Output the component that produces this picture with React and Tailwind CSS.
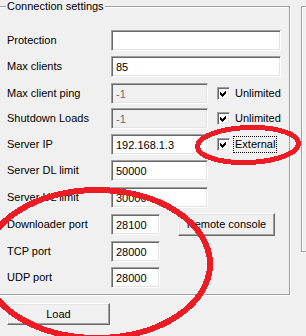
import React from 'react';

// field widths
const WIDE = 'w-[170px]';
const MID = 'w-[97px]';
const SHORT = 'w-[49px]';

const rows = [
  { label: 'Protection', value: '', width: WIDE, gap: 'mt-0' },
  { label: 'Max clients', value: '85', width: WIDE, gap: 'mt-[5px]' },
  { label: 'Max client ping', value: '-1', width: MID, gap: 'mt-[6px]', disabled: true, check: 'Unlimited' },
  { label: 'Shutdown Loads', value: '-1', width: MID, gap: 'mt-[4px]', disabled: true, check: 'Unlimited' },
  { label: 'Server IP', value: '192.168.1.3', width: MID, gap: 'mt-[5px]', check: 'External', focused: true },
  { label: 'Server DL limit', value: '50000', width: MID, gap: 'mt-[5px]' },
  { label: 'Server UL limit', value: '30000', width: MID, gap: 'mt-[6px]' },
  { label: 'Downloader port', value: '28100', width: SHORT, gap: 'mt-[6px]', button: 'Remote console' },
  { label: 'TCP port', value: '28000', width: SHORT, gap: 'mt-[6px]' },
  { label: 'UDP port', value: '28000', width: SHORT, gap: 'mt-[5px]' },
];

function TextField({ value, width, disabled }) {
  return (
    <input
      readOnly
      value={value}
      className={`h-[21px] ${width} pl-[4px] outline-none border border-t-[#a0a0a0] border-l-[#a0a0a0] border-b-white border-r-white shadow-[inset_1px_1px_0_#696969,inset_-1px_-1px_0_#e3e3e3] ${
        disabled ? 'bg-[#f0f0f0] text-[#6d6d6d]' : 'bg-white text-black'
      }`}
    />
  );
}

function CheckBox({ label, focused }) {
  return (
    <div className="ml-[9px] flex items-center">
      <div className="w-[13px] h-[13px] bg-white border border-t-[#a0a0a0] border-l-[#a0a0a0] border-b-white border-r-white shadow-[inset_1px_1px_0_#696969,inset_-1px_-1px_0_#e3e3e3]">
        <svg width="11" height="11" viewBox="0 0 11 11" shapeRendering="crispEdges">
          <path d="M2 4 L4 6 L8 2 L8 5 L4 9 L2 7 Z" fill="#000" />
        </svg>
      </div>
      {focused ? (
        <span className="ml-[3px] h-[17px] px-[1px] flex items-center border border-dotted border-black">{label}</span>
      ) : (
        <span className="ml-[5px]">{label}</span>
      )}
    </div>
  );
}

function Button({ children, className }) {
  return (
    <button
      className={`bg-[#f0f0f0] text-black border border-t-white border-l-white border-b-[#696969] border-r-[#696969] shadow-[inset_-1px_-1px_0_#a0a0a0,inset_1px_1px_0_#e3e3e3] ${className}`}
    >
      {children}
    </button>
  );
}

export default function App() {
  return (
    <div className="relative w-[306px] h-[336px] overflow-hidden bg-[#f0f0f0] text-[11px] text-black font-['Liberation_Sans',Arial,sans-serif]">
      <div className="flex items-start pt-[6px]">
        {/* Connection settings group */}
        <div className="relative ml-[-2px] w-[292px] h-[289px] shrink-0 border border-[#a0a0a0] shadow-[inset_1px_1px_0_#fff,1px_1px_0_#fff]">
          <div className="absolute left-[7px] top-[-8px] px-[1px] bg-[#f0f0f0] leading-[14px]">Connection settings</div>
          <div className="pl-[8px] pt-[23px] flex flex-col">
            {rows.map((r) => (
              <div key={r.label} className={`flex items-center h-[21px] ${r.gap}`}>
                <div className="w-[104px] shrink-0">{r.label}</div>
                <TextField value={r.value} width={r.width} disabled={r.disabled} />
                {r.check && <CheckBox label={r.check} focused={r.focused} />}
                {r.button && (
                  <Button className="ml-[18px] w-[97px] h-[23px] mt-[-1px]">{r.button}</Button>
                )}
              </div>
            ))}
          </div>
        </div>
        {/* neighbouring group, cut off */}
        <div className="ml-[11px] w-[20px] h-[246px] shrink-0 border border-[#a0a0a0] shadow-[inset_1px_1px_0_#fff,1px_1px_0_#fff]" />
      </div>

      <Button className="ml-[7px] mt-[8px] w-[103px] h-[22px]">Load</Button>

      {/* red annotations */}
      <svg className="absolute inset-0 pointer-events-none" width="306" height="336" viewBox="0 0 306 336" shapeRendering="crispEdges">
        <ellipse cx="248" cy="145" rx="50.5" ry="17.5" transform="rotate(-2 248 145)" fill="none" stroke="#ed1c24" strokeWidth="5" />
        <ellipse cx="97" cy="264" rx="113" ry="74" fill="none" stroke="#ed1c24" strokeWidth="6" />
      </svg>
    </div>
  );
}
